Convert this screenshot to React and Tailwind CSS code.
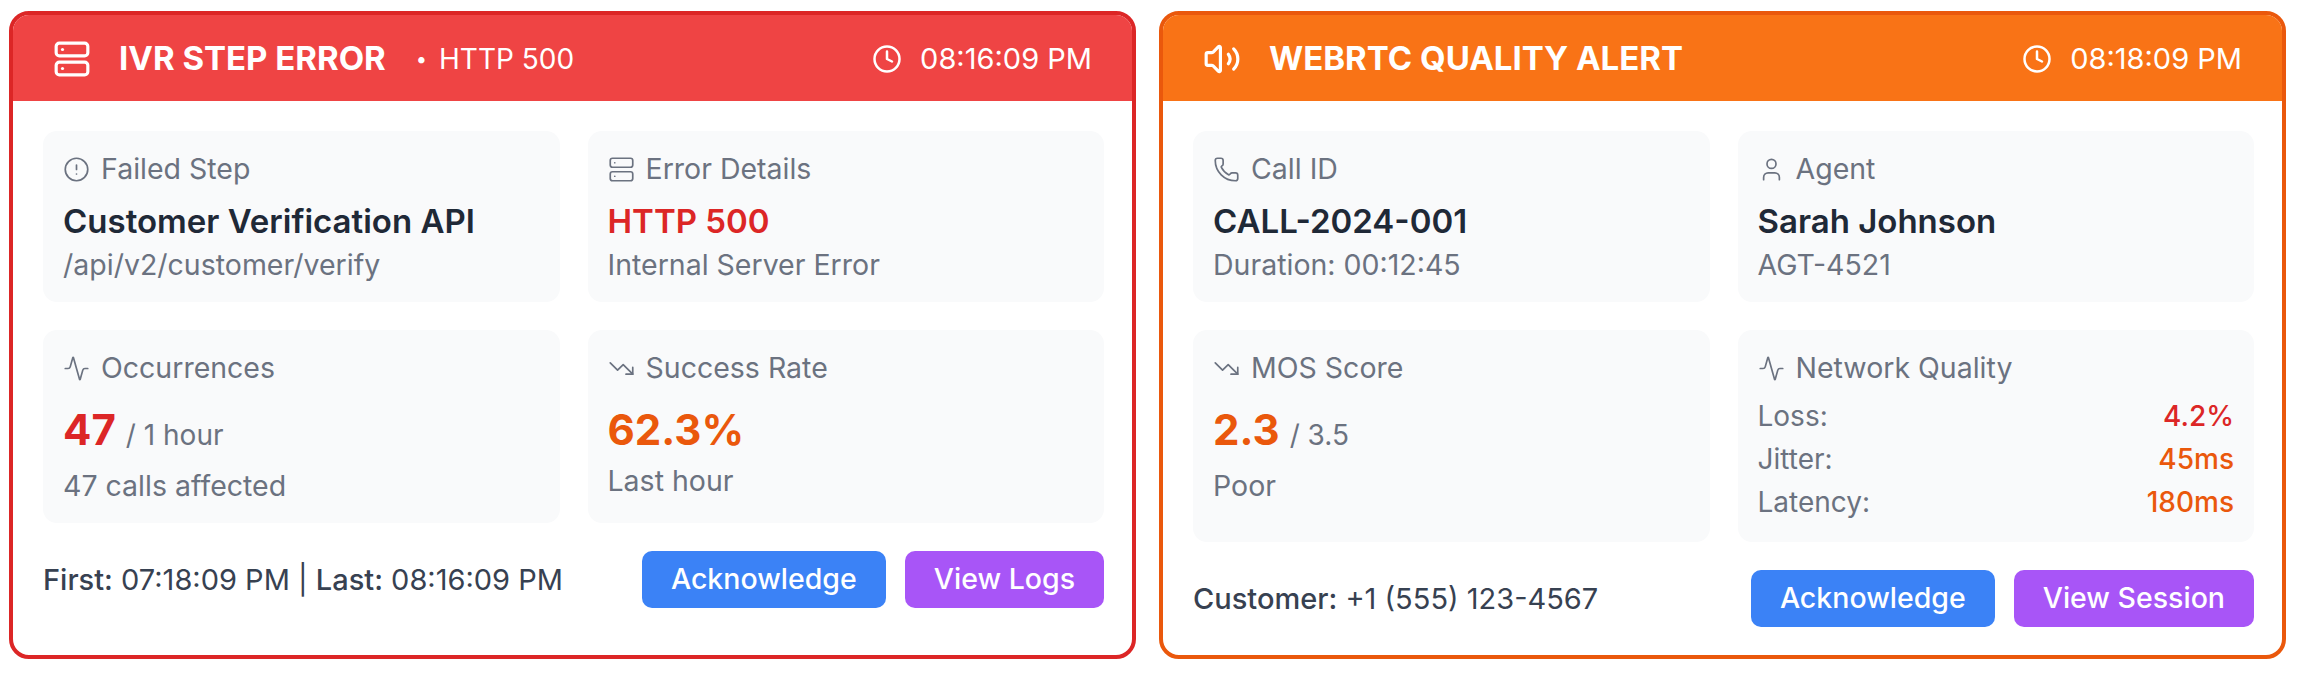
import { Server, Clock, CircleAlert, Activity, TrendingDown, Volume2, Phone, User } from 'lucide-react'

/** Small grey tile holding one metric */
function Tile({ icon: Icon, label, children }) {
  return (
    <div className="bg-[#f9fafb] rounded-[14px] px-5 pt-[19px] pb-[18px]">
      <div className="flex items-center gap-[11px] text-[#6b7280] text-[28.5px] leading-[38px]">
        <Icon size={27} strokeWidth={1.5} />
        <span>{label}</span>
      </div>
      {children}
    </div>
  )
}

function Title({ children, color = 'text-[#1f2937]' }) {
  return <div className={`mt-[10px] text-[33px] leading-[46px] font-semibold ${color}`}>{children}</div>
}

function Sub({ children, className = 'mt-[2px]' }) {
  return <div className={`text-[28.5px] leading-[38px] text-[#6b7280] ${className}`}>{children}</div>
}

function Big({ value, unit, color }) {
  return (
    <div className="mt-[15px] flex items-baseline gap-[10px] leading-[56px]">
      <span className={`text-[42px] font-bold ${color}`}>{value}</span>
      {unit && <span className="text-[28px] text-[#6b7280]">{unit}</span>}
    </div>
  )
}

function Header({ icon: Icon, bg, title, extra, time }) {
  return (
    <div className={`${bg} h-[86px] flex items-center justify-between pt-[2px] pl-[40px] pr-[40px] rounded-t-[16px] text-white`}>
      <div className="flex items-center">
        <Icon size={38} strokeWidth={2} />
        <span className="ml-[28px] text-[33px] font-bold">{title}</span>
        {extra && (
          <div className="ml-[30px] flex items-center gap-[12px] text-[28px]">
            <span className="text-[20px]">•</span>
            <span>{extra}</span>
          </div>
        )}
      </div>
      <div className="flex items-center gap-[18px] text-[29px]">
        <Clock size={30} strokeWidth={2} />
        <span>{time}</span>
      </div>
    </div>
  )
}

function Actions({ label }) {
  return (
    <div className="flex gap-[19px] text-white text-[28.5px] font-medium">
      <button className="h-[57px] px-[29px] rounded-[10px] bg-[#3b82f6]">Acknowledge</button>
      <button className="h-[57px] px-[29px] rounded-[10px] bg-[#a855f7]">{label}</button>
    </div>
  )
}

function Metric({ label, value, color }) {
  return (
    <div className="flex justify-between text-[28px] leading-[43px]">
      <span className="text-[#6b7280]">{label}</span>
      <span className={`font-medium ${color}`}>{value}</span>
    </div>
  )
}

export default function App() {
  return (
    <div className="w-[2298px] h-[673px] bg-white pl-[9px] pr-[12px] pt-[11px] font-['Inter',sans-serif] grid grid-cols-2 gap-[23px] items-start">
      <div className="h-[648px] border-4 border-[#dc2626] rounded-[20px] bg-white">
        <Header icon={Server} bg="bg-[#ef4444]" title="IVR STEP ERROR" extra="HTTP 500" time="08:16:09 PM" />
        <div className="pl-[30px] pr-[28px] pt-[30px]">
          <div className="grid grid-cols-2 gap-[28px]">
            <Tile icon={CircleAlert} label="Failed Step">
              <Title>Customer Verification API</Title>
              <Sub>/api/v2/customer/verify</Sub>
            </Tile>
            <Tile icon={Server} label="Error Details">
              <Title color="text-[#dc2626]">HTTP 500</Title>
              <Sub>Internal Server Error</Sub>
            </Tile>
            <Tile icon={Activity} label="Occurrences">
              <Big value="47" unit="/ 1 hour" color="text-[#dc2626]" />
              <Sub className="mt-[4px]">47 calls affected</Sub>
            </Tile>
            <Tile icon={TrendingDown} label="Success Rate">
              <Big value="62.3%" color="text-[#ea580c]" />
              <Sub className="mt-[4px]">Last hour</Sub>
            </Tile>
          </div>
          <div className="mt-[28px] flex items-center justify-between">
            <div className="text-[29px] text-[#374151]">
              <span className="font-medium">First:</span> 07:18:09 PM | <span className="font-medium">Last:</span> 08:16:09 PM
            </div>
            <Actions label="View Logs" />
          </div>
        </div>
      </div>

      <div className="h-[648px] border-4 border-[#ea580c] rounded-[20px] bg-white">
        <Header icon={Volume2} bg="bg-[#f97316]" title="WEBRTC QUALITY ALERT" time="08:18:09 PM" />
        <div className="pl-[30px] pr-[28px] pt-[30px]">
          <div className="grid grid-cols-2 gap-[28px]">
            <Tile icon={Phone} label="Call ID">
              <Title>CALL-2024-001</Title>
              <Sub>Duration: 00:12:45</Sub>
            </Tile>
            <Tile icon={User} label="Agent">
              <Title>Sarah Johnson</Title>
              <Sub>AGT-4521</Sub>
            </Tile>
            <Tile icon={TrendingDown} label="MOS Score">
              <Big value="2.3" unit="/ 3.5" color="text-[#ea580c]" />
              <Sub className="mt-[4px]">Poor</Sub>
            </Tile>
            <Tile icon={Activity} label="Network Quality">
              <div className="mt-[8px]">
                <Metric label="Loss:" value="4.2%" color="text-[#dc2626]" />
                <Metric label="Jitter:" value="45ms" color="text-[#ea580c]" />
                <Metric label="Latency:" value="180ms" color="text-[#ea580c]" />
              </div>
            </Tile>
          </div>
          <div className="mt-[28px] flex items-center justify-between">
            <div className="text-[29px] text-[#374151]">
              <span className="font-medium">Customer:</span> +1 (555) 123-4567
            </div>
            <Actions label="View Session" />
          </div>
        </div>
      </div>
    </div>
  )
}
